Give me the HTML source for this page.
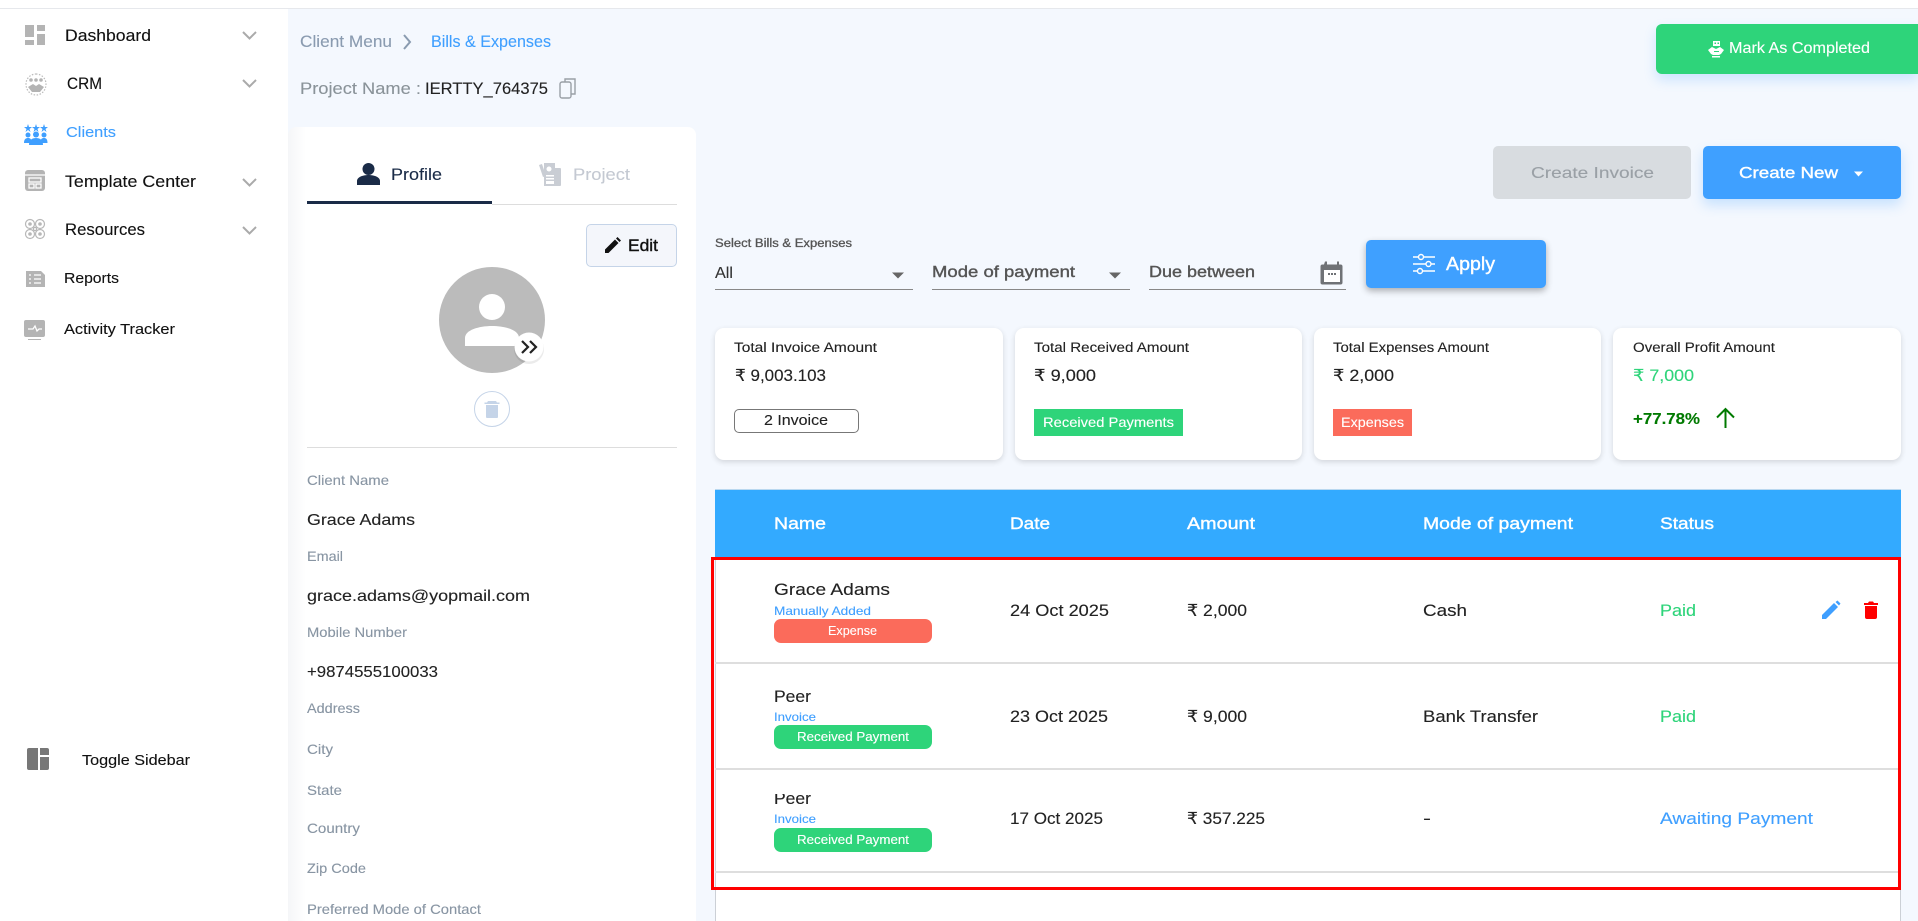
<!DOCTYPE html>
<html lang="en">
<head>
<meta charset="utf-8">
<title>Bills &amp; Expenses</title>
<style>
html,body{margin:0;padding:0;width:1918px;height:921px;overflow:hidden;background:#f4f8fe;font-family:"Liberation Sans",sans-serif}
.b{position:absolute;box-sizing:border-box}
svg{position:absolute;left:0;top:0}
text{font-family:"Liberation Sans","DejaVu Sans",sans-serif;color:#222;fill:currentColor;stroke:currentColor;stroke-width:.12}
text.m{stroke-width:.38}
</style>
</head>
<body>
<div class="b" style="left:0;top:0;width:1918px;height:9px;background:#fff;border-bottom:1px solid #e6e8ec"></div>
<div class="b" style="left:0;top:9px;width:288px;height:912px;background:#fff"></div>
<div class="b" style="left:288px;top:127px;width:408px;height:794px;background:linear-gradient(90deg,#f5f6f8 0,#fff 18px);border-radius:8px 8px 0 0"></div>
<div class="b" style="left:1656px;top:24px;width:262px;height:50px;background:#2ed47a;border-radius:6px 0 0 6px;box-shadow:0 6px 12px rgba(63,160,255,.22)"></div>
<div class="b" style="left:1493px;top:146px;width:198px;height:53px;background:#d8dce0;border-radius:5px"></div>
<div class="b" style="left:1703px;top:146px;width:198px;height:53px;background:#3fa0ff;border-radius:5px;box-shadow:0 6px 12px rgba(63,160,255,.25)"></div>
<div class="b" style="left:1366px;top:240px;width:180px;height:48px;background:#3fa0ff;border-radius:5px;box-shadow:0 3px 7px rgba(0,0,0,.3)"></div>
<div class="b" style="left:715px;top:328px;width:288px;height:132px;background:#fff;border-radius:9px;box-shadow:0 2px 6px rgba(0,0,0,.14)"></div>
<div class="b" style="left:1015px;top:328px;width:287px;height:132px;background:#fff;border-radius:9px;box-shadow:0 2px 6px rgba(0,0,0,.14)"></div>
<div class="b" style="left:1314px;top:328px;width:287px;height:132px;background:#fff;border-radius:9px;box-shadow:0 2px 6px rgba(0,0,0,.14)"></div>
<div class="b" style="left:1613px;top:328px;width:288px;height:132px;background:#fff;border-radius:9px;box-shadow:0 2px 6px rgba(0,0,0,.14)"></div>
<div class="b" style="left:715px;top:489px;width:1186px;height:432px;background:#fff;border-left:1px solid #ccd0d6;border-right:1px solid #ccd0d6"></div>
<div class="b" style="left:715px;top:489px;width:1186px;height:69px;background:#33aaff;border-top:1px solid #b9d8f0"></div>
<div class="b" style="left:715px;top:662px;width:1184px;height:2px;background:#dedede"></div>
<div class="b" style="left:715px;top:768px;width:1184px;height:2px;background:#dedede"></div>
<div class="b" style="left:715px;top:871px;width:1184px;height:2px;background:#dedede"></div>
<div class="b" style="left:734px;top:409px;width:125px;height:24px;border:1px solid #777;border-radius:5px;background:#fff"></div>
<div class="b" style="left:1034px;top:409px;width:149px;height:27px;background:#2ed47a"></div>
<div class="b" style="left:1333px;top:409px;width:79px;height:27px;background:#fb6b5b"></div>
<div class="b" style="left:774px;top:619px;width:158px;height:24px;background:#fb6b5b;border-radius:7px"></div>
<div class="b" style="left:774px;top:725px;width:158px;height:24px;background:#2ed47a;border-radius:7px"></div>
<div class="b" style="left:774px;top:828px;width:158px;height:24px;background:#2ed47a;border-radius:7px"></div>
<div class="b" style="left:586px;top:224px;width:91px;height:43px;background:#f4f6fb;border:1px solid #c5d4e8;border-radius:5px"></div>

<svg width="1918" height="921" viewBox="0 0 1918 921" xmlns="http://www.w3.org/2000/svg">
<!-- sidebar icons -->
<g fill="#b4b4b4">
  <rect x="25" y="25" width="9" height="12"/><rect x="25" y="40" width="9" height="5"/><rect x="37" y="25" width="8" height="6"/><rect x="37" y="34" width="8" height="11"/>
  <circle cx="31" cy="80" r="1.800"/><circle cx="36" cy="80" r="1.800"/><circle cx="41" cy="80" r="1.800"/>
  <path d="M28 87l5-3 3 2 3-2 5 3-4 5h-8z"/>
  <path d="M25 173a3 3 0 0 1 3-3h14a3 3 0 0 1 3 3v15a3 3 0 0 1-3 3H28a3 3 0 0 1-3-3z"/>
  <path d="M26 271h15l4 4v12H26z"/>
  <path d="M24 322a2 2 0 0 1 2-2h17a2 2 0 0 1 2 2v13a2 2 0 0 1-2 2H26a2 2 0 0 1-2-2z"/>
  <rect x="28" y="339" width="13" height="1"/>
</g>
<path d="M36 74a10 10 0 0 1 10 10c0 6-4 11-10 11s-10-5-10-11a10 10 0 0 1 10-10z" fill="none" stroke="#bbb" stroke-width="1.200" stroke-dasharray="1.500 1.500"/>
<g fill="none" stroke="#fff" stroke-width="1.300">
  <path d="M25 175h20"/><rect x="29" y="178" width="12" height="4"/><rect x="29" y="184" width="5" height="4"/><rect x="36" y="184" width="5" height="4"/>
  <path d="M34 275h7M34 279h7M34 283h7M29 275h2M29 279h2M29 283h2"/>
  <path d="M28 329h5l2-3 2 5 2-2h3"/>
</g>
<g fill="none" stroke="#b8b8b8" stroke-width="1.200">
  <circle cx="30" cy="224" r="4.500"/><circle cx="40" cy="224" r="4.500"/><circle cx="30" cy="234" r="4.500"/><circle cx="40" cy="234" r="4.500"/>
  <circle cx="35" cy="229" r="1.600"/>
</g>
<g fill="#b8b8b8"><circle cx="30" cy="224" r="1.800"/><circle cx="40" cy="224" r="1.800"/><circle cx="30" cy="234" r="1.800"/><circle cx="40" cy="234" r="1.800"/></g>
<g fill="#3f9fff">
  <path d="M28 124l1 3h3l-2.500 2 1 3-2.500-2-2.500 2 1-3-2.500-2h3zM36 124l1 3h3l-2.500 2 1 3-2.500-2-2.500 2 1-3-2.500-2h3zM44 124l1 3h3l-2.500 2 1 3-2.500-2-2.500 2 1-3-2.500-2h3z"/>
  <circle cx="28" cy="135" r="2.500"/><circle cx="44" cy="135" r="2.500"/><circle cx="36" cy="134.500" r="3"/>
  <path d="M24 143c0-4 2-5 4-5s3 1 3 2v3zM41 143v-3c0-1 1-2 3-2s3.500 1 3.500 5zM29 145c0-5 3-7 7-7s7 2 7 7z"/>
</g>
<g fill="none" stroke="#aaa" stroke-width="2">
  <path d="M243 32l6.500 6.500 6.500-6.500M243 80l6.500 6.500 6.500-6.500M243 179l6.500 6.500 6.500-6.500M243 227l6.500 6.500 6.500-6.500"/>
</g>
<path d="M29 748h9v22h-9a2 2 0 0 1-2-2v-18a2 2 0 0 1 2-2zM40 748h7a2 2 0 0 1 2 2v5H40zM40 757h9v11a2 2 0 0 1-2 2h-7z" fill="#777"/>

<!-- sidebar text -->
<text x="65" y="41" font-size="16.500" textLength="86" lengthAdjust="spacingAndGlyphs" style="color:#111">Dashboard</text>
<text x="67" y="89" font-size="16.500" textLength="35" lengthAdjust="spacingAndGlyphs" style="color:#111">CRM</text>
<text x="66" y="137" font-size="15" textLength="50" lengthAdjust="spacingAndGlyphs" style="color:#3f9fff">Clients</text>
<text x="65" y="187" font-size="16.500" textLength="131" lengthAdjust="spacingAndGlyphs" style="color:#111">Template Center</text>
<text x="65" y="235" font-size="16.500" textLength="80" lengthAdjust="spacingAndGlyphs" style="color:#111">Resources</text>
<text x="64" y="283" font-size="15" textLength="55" lengthAdjust="spacingAndGlyphs" style="color:#111">Reports</text>
<text x="64" y="334" font-size="15" textLength="111" lengthAdjust="spacingAndGlyphs" style="color:#111">Activity Tracker</text>
<text x="82" y="765" font-size="15" textLength="108" lengthAdjust="spacingAndGlyphs" style="color:#111">Toggle Sidebar</text>

<!-- breadcrumb -->
<text x="300" y="47" font-size="16.500" textLength="92" lengthAdjust="spacingAndGlyphs" style="color:#8a9bb0">Client Menu</text>
<path d="M404 35l6 7-6 7" fill="none" stroke="#8a9bb0" stroke-width="2"/>
<text x="431" y="47" font-size="16.500" textLength="120" lengthAdjust="spacingAndGlyphs" style="color:#3f9fff">Bills &amp; Expenses</text>
<text x="300" y="94" font-size="16.500" textLength="121" lengthAdjust="spacingAndGlyphs" style="color:#8a9399">Project Name :</text>
<text x="425" y="94" font-size="16.500" textLength="123" lengthAdjust="spacingAndGlyphs" style="color:#222">IERTTY_764375</text>
<rect x="560" y="82" width="11" height="16" rx="2" fill="none" stroke="#9a9fa6" stroke-width="1.400"/>
<path d="M565 82v-3h10v15h-4" fill="none" stroke="#9a9fa6" stroke-width="1.400"/>

<!-- tabs -->
<circle cx="368.500" cy="169" r="6" fill="#1a2b47"/>
<path d="M357 185v-4c0-4 6-6 11.500-6s11.500 2 11.500 6v4z" fill="#1a2b47"/>
<text x="391" y="180" font-size="17" textLength="51" lengthAdjust="spacingAndGlyphs" style="color:#1a2b47">Profile</text>
<rect x="307" y="201" width="185" height="3" fill="#1a2b47"/>
<rect x="492" y="204" width="185" height="1" fill="#ddd"/>
<g fill="#c9cdd4">
  <path d="M544 163h11v5h5a1 1 0 0 1 1 1v16a1 1 0 0 1-1 1h-16z"/>
  <path d="M539 165l3-1 4 12-3 1z"/>
</g>
<g fill="#fff"><circle cx="549" cy="169" r="2.500"/><rect x="546" y="175" width="8" height="1.500"/><rect x="546" y="178" width="8" height="1.500"/><rect x="546" y="181" width="8" height="3"/></g>
<text x="573" y="180" font-size="17" textLength="57" lengthAdjust="spacingAndGlyphs" style="color:#c4c9d2">Project</text>

<path d="M605 253v-3.500l10-10 3.500 3.500-10 10zM616 238.500l1.500-1.500 3.500 3.500-1.500 1.500z" fill="#111"/>
<text class="m" x="628" y="251" font-size="17" textLength="30" lengthAdjust="spacingAndGlyphs" style="color:#111">Edit</text>

<!-- avatar -->
<circle cx="492" cy="320" r="53" fill="#bbb"/>
<circle cx="492" cy="307" r="13" fill="#fff"/>
<path d="M465 346v-8c0-8 14-12 27-12s27 4 27 12v8z" fill="#fff"/>
<circle cx="529" cy="349" r="15" fill="#000" opacity=".08"/>
<circle cx="529" cy="347" r="14.500" fill="#fff"/>
<path d="M522 341l6 6-6 6M530 341l6 6-6 6" fill="none" stroke="#222" stroke-width="2.200"/>
<circle cx="492" cy="409" r="17.500" fill="#fff" stroke="#c5d4e8" stroke-width="1"/>
<path d="M487 402.500l1-1.500h8l1 1.500h2.500v1.500h-15v-1.500zM486 405h12v12a1 1 0 0 1-1 1h-10a1 1 0 0 1-1-1z" fill="#c5d4e8"/>
<rect x="307" y="447" width="370" height="1" fill="#ddd"/>

<!-- fields -->
<text x="307" y="485" font-size="14" textLength="82" lengthAdjust="spacingAndGlyphs" style="color:#8895a3">Client Name</text>
<text x="307" y="561" font-size="14" textLength="36" lengthAdjust="spacingAndGlyphs" style="color:#8895a3">Email</text>
<text x="307" y="637" font-size="14" textLength="100" lengthAdjust="spacingAndGlyphs" style="color:#8895a3">Mobile Number</text>
<text x="307" y="713" font-size="14" textLength="53" lengthAdjust="spacingAndGlyphs" style="color:#8895a3">Address</text>
<text x="307" y="754" font-size="14" textLength="26" lengthAdjust="spacingAndGlyphs" style="color:#8895a3">City</text>
<text x="307" y="795" font-size="14" textLength="35" lengthAdjust="spacingAndGlyphs" style="color:#8895a3">State</text>
<text x="307" y="833" font-size="14" textLength="53" lengthAdjust="spacingAndGlyphs" style="color:#8895a3">Country</text>
<text x="307" y="873" font-size="14" textLength="59" lengthAdjust="spacingAndGlyphs" style="color:#8895a3">Zip Code</text>
<text x="307" y="914" font-size="14" textLength="174" lengthAdjust="spacingAndGlyphs" style="color:#8895a3">Preferred Mode of Contact</text>
<text x="307" y="525" font-size="16" textLength="108" lengthAdjust="spacingAndGlyphs">Grace Adams</text>
<text x="307" y="601" font-size="16" textLength="223" lengthAdjust="spacingAndGlyphs">grace.adams@yopmail.com</text>
<text x="307" y="677" font-size="16" textLength="131" lengthAdjust="spacingAndGlyphs">+9874555100033</text>

<!-- top buttons -->
<g fill="#fff">
  <rect x="1713" y="41" width="7" height="5"/>
  <path d="M1708 50l4-3 4 2 4-2 4 3-3 4-2 1h-6l-2-1z"/>
  <rect x="1712" y="56" width="8" height="1.500"/>
</g>
<g fill="#2ed47a"><rect x="1714.500" y="42.500" width="1.500" height="1.500"/><rect x="1717.500" y="42.500" width="1.500" height="1.500"/><rect x="1714" y="51" width="5" height="1"/></g>
<text x="1729" y="53" font-size="15.500" textLength="141" lengthAdjust="spacingAndGlyphs" style="color:#fff">Mark As Completed</text>
<text x="1531" y="178" font-size="16" textLength="123" lengthAdjust="spacingAndGlyphs" style="color:#9aa0a6">Create Invoice</text>
<text class="m" x="1739" y="178" font-size="16" textLength="99" lengthAdjust="spacingAndGlyphs" style="color:#fff">Create New</text>
<path d="M1854 171.500h9l-4.500 5z" fill="#fff"/>

<!-- filters -->
<text class="m" x="715" y="247" font-size="11.500" textLength="137" lengthAdjust="spacingAndGlyphs" style="color:#555;stroke-width:.3">Select Bills &amp; Expenses</text>
<text x="715" y="278" font-size="16" textLength="18" lengthAdjust="spacingAndGlyphs" style="color:#333">All</text>
<rect x="715" y="289" width="198" height="1" fill="#888"/>
<path d="M892 272.500h12l-6 6z" fill="#666"/>
<text class="m" x="932" y="277" font-size="16" textLength="143" lengthAdjust="spacingAndGlyphs" style="color:#555">Mode of payment</text>
<rect x="932" y="289" width="198" height="1" fill="#888"/>
<path d="M1109 272.500h12l-6 6z" fill="#666"/>
<text class="m" x="1149" y="277" font-size="16" textLength="106" lengthAdjust="spacingAndGlyphs" style="color:#555">Due between</text>
<rect x="1149" y="289" width="197" height="1" fill="#888"/>
<path d="M1325 261.500h2v3h10v-3h2v3h1.500a2 2 0 0 1 2 2v16a2 2 0 0 1-2 2h-18a2 2 0 0 1-2-2v-16a2 2 0 0 1 2-2h1.500z" fill="#6f7276"/>
<rect x="1324" y="270" width="16" height="12" fill="#fff"/>
<path d="M1328 273h2v2h-2zM1331 273h2v2h-2zM1334 273h2v2h-2z" fill="#6f7276"/>

<g fill="none" stroke="#fff" stroke-width="1.400">
  <path d="M1413 257h5M1424 257h11M1413 264h13M1431 264h4M1413 271h4M1423 271h12"/>
  <circle cx="1421" cy="257" r="2.500"/><circle cx="1428.500" cy="264" r="2.500"/><circle cx="1420" cy="271" r="2.500"/>
</g>
<text class="m" x="1446" y="270" font-size="18" textLength="49" lengthAdjust="spacingAndGlyphs" style="color:#fff">Apply</text>

<!-- cards -->
<text x="734" y="352" font-size="13.500" textLength="143" lengthAdjust="spacingAndGlyphs">Total Invoice Amount</text>
<text x="1034" y="352" font-size="13.500" textLength="155" lengthAdjust="spacingAndGlyphs">Total Received Amount</text>
<text x="1333" y="352" font-size="13.500" textLength="156" lengthAdjust="spacingAndGlyphs">Total Expenses Amount</text>
<text x="1633" y="352" font-size="13.500" textLength="142" lengthAdjust="spacingAndGlyphs">Overall Profit Amount</text>
<text x="735" y="381" font-size="16.500" textLength="91" lengthAdjust="spacingAndGlyphs">₹ 9,003.103</text>
<text x="1034" y="381" font-size="16.500" textLength="62" lengthAdjust="spacingAndGlyphs">₹ 9,000</text>
<text x="1333" y="381" font-size="16.500" textLength="61" lengthAdjust="spacingAndGlyphs">₹ 2,000</text>
<text x="1633" y="381" font-size="16.500" textLength="61" lengthAdjust="spacingAndGlyphs" style="color:#2ed47a">₹ 7,000</text>
<text x="764" y="425" font-size="14.500" textLength="64" lengthAdjust="spacingAndGlyphs">2 Invoice</text>
<text x="1043" y="427" font-size="14" textLength="131" lengthAdjust="spacingAndGlyphs" style="color:#fff">Received Payments</text>
<text x="1341" y="427" font-size="14" textLength="63" lengthAdjust="spacingAndGlyphs" style="color:#fff">Expenses</text>
<text x="1633" y="424" font-size="16" font-weight="700" textLength="67" lengthAdjust="spacingAndGlyphs" style="color:#007a00">+77.78%</text>
<path d="M1725.500 428v-19M1717 417.500l8.500-8.500 8.500 8.500" fill="none" stroke="#007a00" stroke-width="2"/>

<!-- table head -->
<text class="m" x="774" y="529" font-size="16.500" textLength="52" lengthAdjust="spacingAndGlyphs" style="color:#fff">Name</text>
<text class="m" x="1010" y="529" font-size="16.500" textLength="40" lengthAdjust="spacingAndGlyphs" style="color:#fff">Date</text>
<text class="m" x="1187" y="529" font-size="16.500" textLength="68" lengthAdjust="spacingAndGlyphs" style="color:#fff">Amount</text>
<text class="m" x="1423" y="529" font-size="16.500" textLength="150" lengthAdjust="spacingAndGlyphs" style="color:#fff">Mode of payment</text>
<text class="m" x="1660" y="529" font-size="16.500" textLength="54" lengthAdjust="spacingAndGlyphs" style="color:#fff">Status</text>

<!-- row 1 -->
<text x="774" y="595" font-size="17" textLength="116" lengthAdjust="spacingAndGlyphs">Grace Adams</text>
<text x="774" y="615" font-size="12" textLength="97" lengthAdjust="spacingAndGlyphs" style="color:#3f9fff">Manually Added</text>
<text x="828" y="635" font-size="12.500" textLength="49" lengthAdjust="spacingAndGlyphs" style="color:#fff">Expense</text>
<text x="1010" y="616" font-size="16.500" textLength="99" lengthAdjust="spacingAndGlyphs">24 Oct 2025</text>
<text x="1187" y="616" font-size="16.500" textLength="60" lengthAdjust="spacingAndGlyphs">₹ 2,000</text>
<text x="1423" y="616" font-size="16.500" textLength="44" lengthAdjust="spacingAndGlyphs">Cash</text>
<text x="1660" y="616" font-size="16.500" textLength="36" lengthAdjust="spacingAndGlyphs" style="color:#2ed47a">Paid</text>
<path d="M1822 619v-4l12-12 4 4-12 12zM1835.500 602l2-1.500 3 3-1.500 2z" fill="#3f9fff"/>
<path d="M1864 603h4l1-1.500h4l1 1.500h4v2h-14zM1865 606h12v11a2 2 0 0 1-2 2h-8a2 2 0 0 1-2-2z" fill="#f00"/>

<!-- row 2 -->
<text x="774" y="702" font-size="17" textLength="37" lengthAdjust="spacingAndGlyphs">Peer</text>
<text x="774" y="721" font-size="12" textLength="42" lengthAdjust="spacingAndGlyphs" style="color:#3f9fff">Invoice</text>
<text x="797" y="741" font-size="12.500" textLength="112" lengthAdjust="spacingAndGlyphs" style="color:#fff">Received Payment</text>
<text x="1010" y="722" font-size="16.500" textLength="98" lengthAdjust="spacingAndGlyphs">23 Oct 2025</text>
<text x="1187" y="722" font-size="16.500" textLength="60" lengthAdjust="spacingAndGlyphs">₹ 9,000</text>
<text x="1423" y="722" font-size="16.500" textLength="115" lengthAdjust="spacingAndGlyphs">Bank Transfer</text>
<text x="1660" y="722" font-size="16.500" textLength="36" lengthAdjust="spacingAndGlyphs" style="color:#2ed47a">Paid</text>

<!-- row 3 -->
<text x="774" y="804" font-size="17" textLength="37" lengthAdjust="spacingAndGlyphs">Peer</text>
<rect x="770" y="786" width="50" height="8" fill="#fff"/>
<text x="774" y="823" font-size="12" textLength="42" lengthAdjust="spacingAndGlyphs" style="color:#3f9fff">Invoice</text>
<text x="797" y="844" font-size="12.500" textLength="112" lengthAdjust="spacingAndGlyphs" style="color:#fff">Received Payment</text>
<text x="1010" y="824" font-size="16.500" textLength="93" lengthAdjust="spacingAndGlyphs">17 Oct 2025</text>
<text x="1187" y="824" font-size="16.500" textLength="78" lengthAdjust="spacingAndGlyphs">₹ 357.225</text>
<text x="1423" y="824" font-size="16.500" textLength="8" lengthAdjust="spacingAndGlyphs">-</text>
<text x="1660" y="824" font-size="16.500" textLength="153" lengthAdjust="spacingAndGlyphs" style="color:#3f9fff">Awaiting Payment</text>

<!-- red annotation -->
<rect x="712.500" y="558.500" width="1187" height="330" fill="none" stroke="#f00" stroke-width="3"/>
</svg>
</body>
</html>
